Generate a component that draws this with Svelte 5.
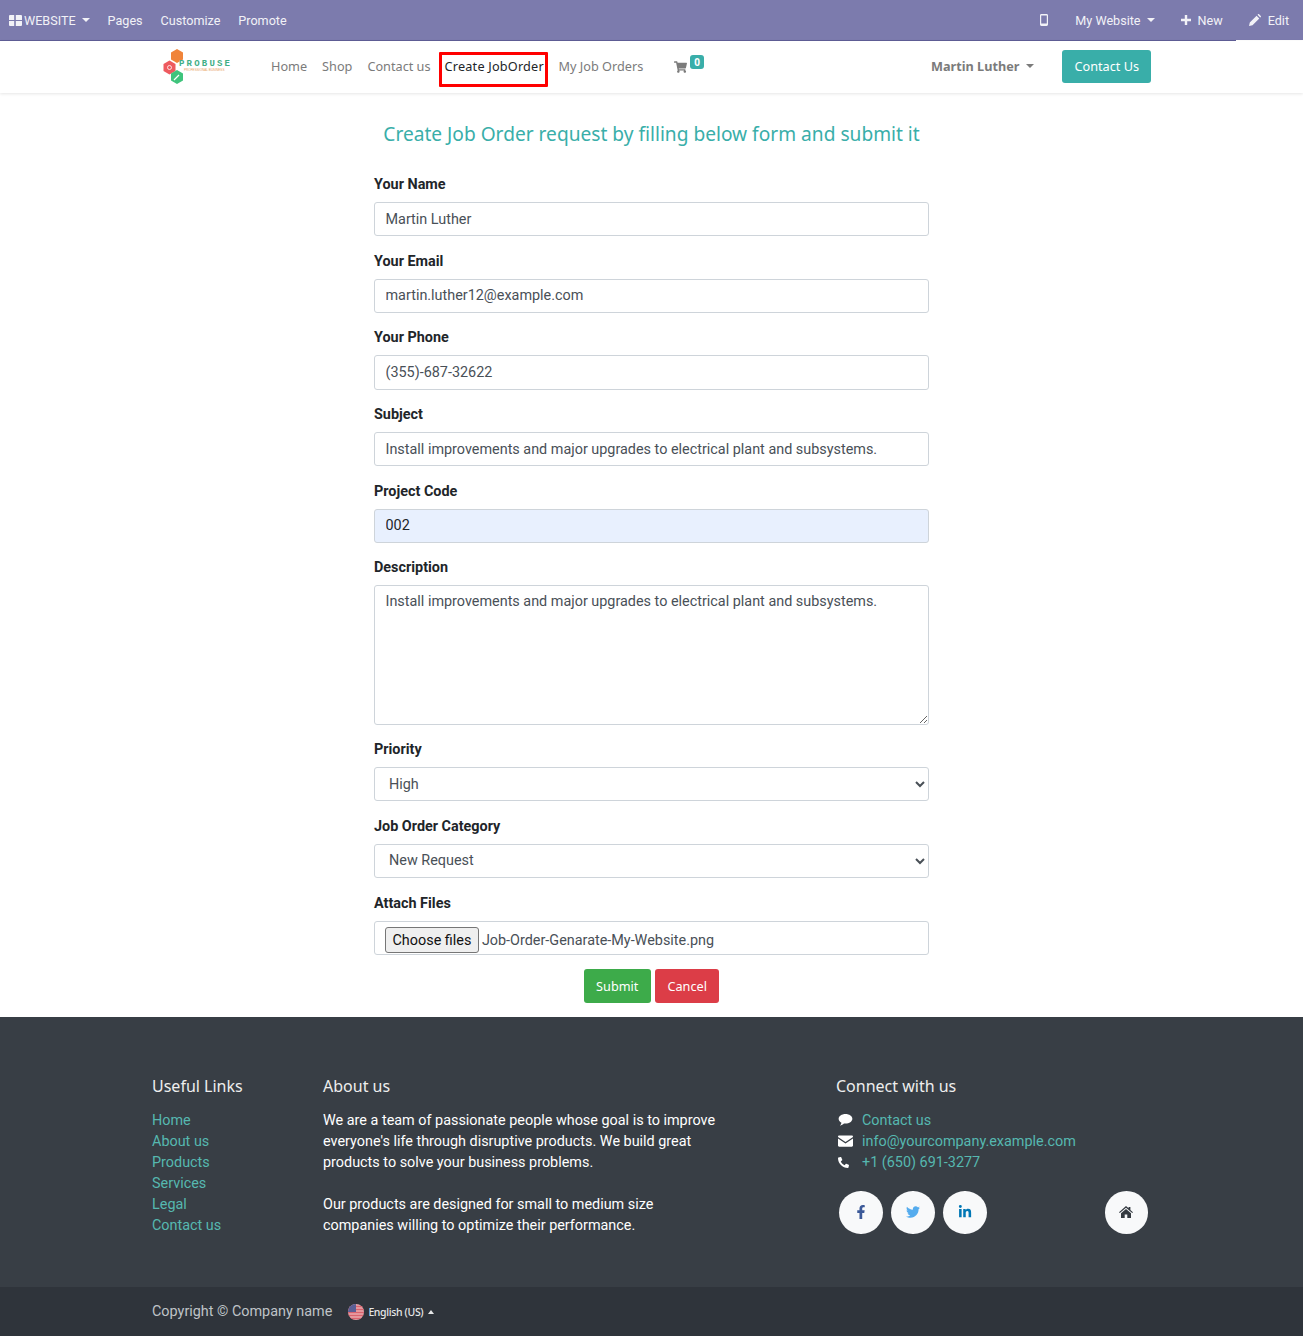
<script lang="ts">
	const usefulLinks = ['Home', 'About us', 'Products', 'Services', 'Legal', 'Contact us'];
</script>

<div class="topbar">
	<a class="tb-item brand" href="#top">
		<svg class="i-grid" viewBox="0 0 13 11"><path d="M0 1a1 1 0 0 1 1-1h4.2v5H0zM6.8 0H12a1 1 0 0 1 1 1v4H6.8zM0 6h5.2v5H1a1 1 0 0 1-1-1zM6.8 6H13v4a1 1 0 0 1-1 1H6.8z" /></svg>
		WEBSITE<span class="caret"></span>
	</a>
	<a class="tb-item" href="#top">Pages</a>
	<a class="tb-item" href="#top">Customize</a>
	<a class="tb-item" href="#top">Promote</a>
	<div class="tb-right">
		<svg class="i-mobile" viewBox="0 0 8 12"><path fill-rule="evenodd" d="M1.4 0h5.2C7.4 0 8 .6 8 1.4v9.2c0 .8-.6 1.4-1.4 1.4H1.4C.6 12 0 11.400 0 10.600V1.400C0 .6.6 0 1.400 0zM1.200 1.600v7.800h5.600V1.600z" /></svg>
		<a class="tb-item mywebsite" href="#top">My Website<span class="caret"></span></a>
		<a class="tb-item new" href="#top">
			<svg class="i-plus" viewBox="0 0 10 10"><path d="M3.800 0h2.400v3.800H10v2.400H6.200V10H3.800V6.200H0V3.800h3.800z" /></svg>New
		</a>
		<a class="tb-item edit" href="#top">
			<svg class="i-pencil" viewBox="0 0 12 12"><path d="M0 12l.8-3.500L7.600 1.700l2.700 2.700-6.800 6.800zM8.500.8L9.100.2c.3-.3.7-.3 1 0l1.700 1.700c.3.3.3.7 0 1l-.6.6z" /></svg>Edit
		</a>
	</div>
</div>

<header class="navbar">
	<a class="logo" href="#top">
		<svg viewBox="0 0 20 36" class="hexes">
			<path d="M14 1l6 3.500v7L14 15l-6-3.500v-7z" fill="#f0843a" />
			<path d="M6.500 12.500l6 3.500v7l-6 3.500-6-3.500v-7z" fill="#ee5a5f" />
			<path d="M14 22l6 3.500v7L14 36l-6-3.500v-7z" fill="#3fc47c" />
			<circle cx="6.500" cy="19.500" r="2" fill="none" stroke="#fff" stroke-width=".8" />
			<path d="M11 32l5-5" stroke="#fff" stroke-width="1.200" />
		</svg>
		<span class="logo-text">
			<span class="logo-name">PROBUSE</span>
			<span class="logo-tag">PROFESSIONAL BUSINESS</span>
		</span>
	</a>
	<nav class="nav-links">
		<a href="#top">Home</a>
		<a href="#top">Shop</a>
		<a href="#top">Contact us</a>
		<a class="current" href="#top">Create JobOrder</a>
		<a href="#top">My Job Orders</a>
		<a class="cart" href="#top">
			<svg viewBox="0 0 576 512"><path d="M528.120 301.319l47.273-208C578.806 78.301 567.391 67 551.990 67H159.208l-9.166-44.810C147.758 10.021 137.930 0 126.529 0H24C10.745 0 0 10.745 0 24v16c0 13.255 10.745 24 24 24h69.883l70.248 343.435C147.325 417.100 136 435.222 136 456c0 30.928 25.072 56 56 56s56-25.072 56-56c0-15.674-6.447-29.835-16.824-40h209.647C430.447 426.165 424 440.326 424 456c0 30.928 25.072 56 56 56s56-25.072 56-56c0-22.172-12.888-41.332-31.579-50.405l5.517-24.276c3.413-15.018-8.002-29.319-23.403-29.319H218.117l-6.545-32h293.145c11.206 0 20.920-7.754 23.403-18.681z" /></svg>
			<span class="badge">0</span>
		</a>
	</nav>
	<a class="user" href="#top">Martin Luther<span class="caret"></span></a>
	<a class="contact-btn" href="#top">Contact Us</a>
</header>

<main class="page">
	<h1>Create Job Order request by filling below form and submit it</h1>
	<form class="job-form" onsubmit={(event) => event.preventDefault()}>
		<div class="field">
			<label for="name">Your Name</label>
			<input id="name" type="text" value="Martin Luther" />
		</div>
		<div class="field">
			<label for="email">Your Email</label>
			<input id="email" type="text" value="martin.luther12@example.com" />
		</div>
		<div class="field">
			<label for="phone">Your Phone</label>
			<input id="phone" type="text" value="(355)-687-32622" />
		</div>
		<div class="field">
			<label for="subject">Subject</label>
			<input id="subject" type="text" value="Install improvements and major upgrades to electrical plant and subsystems." />
		</div>
		<div class="field">
			<label for="code">Project Code</label>
			<input id="code" class="autofilled" type="text" value="002" />
		</div>
		<div class="field">
			<label for="description">Description</label>
			<textarea id="description">Install improvements and major upgrades to electrical plant and subsystems.</textarea>
		</div>
		<div class="field">
			<label for="priority">Priority</label>
			<select id="priority"><option>High</option></select>
		</div>
		<div class="field">
			<label for="category">Job Order Category</label>
			<select id="category"><option>New Request</option></select>
		</div>
		<div class="field">
			<label for="files">Attach Files</label>
			<div class="file-box">
				<button id="files" type="button" class="choose">Choose files</button>
				<span>Job-Order-Genarate-My-Website.png</span>
			</div>
		</div>
		<div class="actions">
			<button type="submit" class="btn submit">Submit</button>
			<button type="button" class="btn cancel">Cancel</button>
		</div>
	</form>
</main>

<footer>
	<div class="footer-main">
		<section>
			<h5>Useful Links</h5>
			<ul>
				{#each usefulLinks as link}
					<li><a href="#top">{link}</a></li>
				{/each}
			</ul>
		</section>
		<section class="about">
			<h5>About us</h5>
			<p>We are a team of passionate people whose goal is to improve everyone's life through disruptive products. We build great products to solve your business problems.</p>
			<p>Our products are designed for small to medium size companies willing to optimize their performance.</p>
		</section>
		<section>
			<h5>Connect with us</h5>
			<ul class="connect">
				<li>
					<svg viewBox="0 0 16 14"><path d="M8 0c4.400 0 8 2.500 8 5.600s-3.600 5.600-8 5.600c-.6 0-1.200 0-1.800-.1C5 12.300 3.400 13.300 1.500 13.600c.9-.9 1.600-2 1.800-3.300C1.300 9.300 0 7.600 0 5.600 0 2.500 3.600 0 8 0z" /></svg>
					<a href="#top">Contact us</a>
				</li>
				<li>
					<svg viewBox="0 0 16 12"><path d="M1.300 0h13.400c.7 0 1.300.6 1.300 1.300v.5L8 7 0 1.800v-.5C0 .6.6 0 1.300 0zM0 3.400l8 5.200 8-5.200v7.300c0 .7-.6 1.300-1.300 1.300H1.300C.6 12 0 11.400 0 10.700z" /></svg>
					<a href="#top">info@yourcompany.example.com</a>
				</li>
				<li>
					<svg class="phone" viewBox="0 0 512 512"><path d="M493.400 24.600l-104-24c-11.300-2.600-22.900 3.300-27.500 13.900l-48 112c-4.200 9.800-1.400 21.300 6.900 28l60.600 49.600c-36 76.700-98.900 140.500-177.200 177.200l-49.600-60.600c-6.800-8.300-18.200-11.100-28-6.900l-112 48C3.900 366.500-2 378.100.6 389.400l24 104C27.100 504.200 36.700 512 48 512c256.100 0 464-207.500 464-464 0-11.200-7.700-20.900-18.600-23.400z" /></svg>
					<a href="#top">+1 (650) 691-3277</a>
				</li>
			</ul>
			<div class="socials">
				<a href="#top" class="round fb" aria-label="Facebook">
					<svg viewBox="0 0 320 512"><path d="M279.140 288l14.220-92.660h-88.910v-60.130c0-25.350 12.420-50.060 52.240-50.060h40.420V6.260S260.430 0 225.360 0c-73.220 0-121.080 44.380-121.080 124.720v70.620H22.890V288h81.390v224h100.170V288z" /></svg>
				</a>
				<a href="#top" class="round tw" aria-label="Twitter">
					<svg viewBox="0 0 512 512"><path d="M459.370 151.716c.325 4.548.325 9.097.325 13.645 0 138.720-105.583 298.558-298.558 298.558-59.452 0-114.680-17.219-161.137-47.106 8.447.974 16.568 1.299 25.340 1.299 49.055 0 94.213-16.568 130.274-44.832-46.132-.975-84.792-31.188-98.112-72.772 6.498.974 12.995 1.624 19.818 1.624 9.421 0 18.843-1.300 27.614-3.573-48.081-9.747-84.143-51.980-84.143-102.985v-1.299c13.969 7.797 30.214 12.670 47.431 13.319-28.264-18.843-46.781-51.005-46.781-87.391 0-19.492 5.197-37.360 14.294-52.954 51.655 63.675 129.300 105.258 216.365 109.807-1.624-7.797-2.599-15.918-2.599-24.040 0-57.828 46.782-104.934 104.934-104.934 30.213 0 57.502 12.670 76.670 33.137 23.715-4.548 46.456-13.320 66.599-25.340-7.798 24.366-24.366 44.833-46.132 57.827 21.117-2.273 41.584-8.122 60.426-16.243-14.292 20.791-32.161 39.308-52.628 54.253z" /></svg>
				</a>
				<a href="#top" class="round li" aria-label="LinkedIn">
					<svg viewBox="0 0 448 512"><path d="M100.280 448H7.400V148.900h92.880zM53.790 108.100C24.090 108.100 0 83.500 0 53.800a53.790 53.790 0 0 1 107.580 0c0 29.700-24.100 54.300-53.790 54.300zM447.900 448h-92.680V302.400c0-34.700-.7-79.200-48.290-79.200-48.290 0-55.690 37.700-55.690 76.700V448h-92.780V148.900h89.080v40.800h1.300c12.400-23.500 42.690-48.300 87.880-48.300 94 0 111.280 61.900 111.280 142.300V448z" /></svg>
				</a>
				<a href="#top" class="round home" aria-label="Home">
					<svg viewBox="0 0 14 12"><path d="M7 0l2.600 2.300V1h1.800v2.900L14 6.200l-.8.9L7 1.700.8 7.100 0 6.200zM2 7.200L7 2.900l5 4.300V12H8.300V8.600H5.700V12H2z" /></svg>
				</a>
			</div>
		</section>
	</div>
	<div class="copyright">
		<span class="copy-text">Copyright © Company name</span>
		<svg class="flag" viewBox="0 0 16 16">
			<defs><clipPath id="flag-clip"><circle cx="8" cy="8" r="8" /></clipPath></defs>
			<g clip-path="url(#flag-clip)">
				<rect width="16" height="16" fill="#e8a9ad" />
				<path d="M0 2.500h16M0 5.500h16M0 8.500h16M0 11.500h16M0 14.500h16" stroke="#d9636e" stroke-width="1.400" />
				<rect width="8" height="8" fill="#5a5f96" />
			</g>
		</svg>
		<a class="lang" href="#top">English (US)<span class="caret up"></span></a>
	</div>
</footer>

<style>
	:global(body) {
		margin: 0;
		background: #fff;
		font-family: Roboto, 'Liberation Sans', sans-serif;
		font-size: 14.4px;
		color: #212529;
	}
	a {
		text-decoration: none;
		color: inherit;
	}
	svg {
		fill: currentColor;
		flex: none;
	}
	.caret {
		display: inline-block;
		margin-left: 6px;
		border-top: 4px solid currentColor;
		border-left: 4px solid transparent;
		border-right: 4px solid transparent;
		vertical-align: 2px;
	}
	.caret.up {
		border-top: 0;
		border-bottom: 4px solid currentColor;
		border-left-width: 3.500px;
		border-right-width: 3.500px;
		margin-left: 5px;
	}

	.topbar {
		display: flex;
		align-items: center;
		box-sizing: border-box;
		height: 41px;
		padding: 0 14px 0 9px;
		background: #7c7bad;
		border-bottom: 1px solid #5f5e97;
		color: #f2f2f7;
		font-size: 12.600px;
	}
	.tb-item {
		display: inline-flex;
		align-items: center;
		margin-right: 18px;
	}
	.i-grid {
		width: 13px;
		height: 11px;
		margin-right: 2px;
	}
	.tb-right {
		display: flex;
		align-items: center;
		align-self: stretch;
		margin-left: auto;
	}
	.i-mobile {
		width: 8px;
		height: 12px;
		margin-right: 27px;
	}
	.mywebsite {
		margin-right: 26px;
	}
	.i-plus {
		width: 10px;
		height: 10px;
		margin-right: 7px;
	}
	.new {
		margin-right: 13px;
	}
	.i-pencil {
		width: 12px;
		height: 12px;
		margin-right: 7px;
	}
	.edit {
		position: relative;
		align-self: stretch;
		margin-right: -14px;
		padding: 0 14px 0 13px;
	}
	.edit::after {
		content: '';
		position: absolute;
		left: 0;
		right: 0;
		bottom: -1px;
		height: 1px;
		background: #fff;
	}

	.navbar {
		display: flex;
		align-items: center;
		box-sizing: border-box;
		height: 52px;
		padding: 0 152px 2px 163px;
		background: #fff;
		box-shadow: 0 1px 3px #0000001a;
		font-family: 'Noto Sans', sans-serif;
		font-size: 12.700px;
		color: #7b7b7b;
		position: relative;
	}
	.logo {
		display: flex;
		align-items: center;
		width: 108px;
		flex: none;
	}
	.hexes {
		width: 20px;
		height: 36px;
	}
	.logo-text {
		display: flex;
		flex-direction: column;
		margin-left: -4px;
		line-height: 1;
	}
	.logo-name {
		font-family: 'Liberation Mono', monospace;
		font-weight: 700;
		font-size: 9px;
		letter-spacing: 2.200px;
		color: #3fae86;
	}
	.logo-tag {
		padding-left: 5px;
		font-family: 'Liberation Sans', sans-serif;
		font-size: 3.100px;
		color: #e8a15f;
		white-space: nowrap;
	}
	.nav-links {
		display: flex;
		align-items: center;
		gap: 15px;
	}
	.current {
		margin: 7px -4px 0 -7px;
		padding: 1px 0 7px 3px;
		width: 100px;
		box-sizing: content-box;
		border: 3px solid #f00;
		border-radius: 1px;
		line-height: 21px;
		color: #212529;
		white-space: nowrap;
		letter-spacing: 0.2px;
	}
	.cart {
		display: flex;
		align-items: flex-start;
		margin-left: 16px;
	}
	.cart svg {
		width: 13px;
		height: 12px;
		margin-top: 2px;
	}
	.badge {
		display: block;
		margin: -4px 0 0 3px;
		padding: 0 4px;
		border-radius: 3px;
		background: #39aea9;
		color: #fff;
		font-size: 10px;
		line-height: 14px;
		font-weight: 700;
	}
	.user {
		margin-left: auto;
		margin-right: 28px;
		font-weight: 700;
		color: #7b7b7b;
	}
	.user .caret {
		margin-left: 7px;
		vertical-align: 3px;
	}
	.contact-btn {
		padding: 0 12px;
		height: 33px;
		line-height: 33px;
		background: #39aea9;
		color: #fff;
		border-radius: 3px;
	}

	.page {
		padding: 27px 0 13.660px;
	}
	h1 {
		margin: 0 0 26.040px;
		text-align: center;
		font-family: 'Noto Sans', sans-serif;
		font-weight: 400;
		font-size: 19.150px;
		line-height: 28px;
		color: #39aea9;
	}
	.job-form {
		width: 555px;
		margin: 0 auto;
	}
	.field {
		margin-bottom: 14.400px;
	}
	label {
		display: block;
		height: 21px;
		margin-bottom: 7px;
		line-height: 21px;
		font-weight: 700;
		font-size: 14.400px;
	}
	input,
	textarea,
	select,
	.file-box {
		display: block;
		box-sizing: border-box;
		width: 100%;
		height: 34.300px;
		padding: 0 10.500px;
		border: 1px solid #ced4da;
		border-radius: 3px;
		background: #fff;
		color: #495057;
		font-family: inherit;
		font-size: 14.400px;
		outline: none;
	}
	select {
		padding: 0 10px;
	}
	.autofilled {
		background: #e8f0fe;
		color: #212529;
	}
	textarea {
		height: 139.300px;
		padding: 5px 10.500px;
		line-height: 21px;
		margin: 0;
	}
	.file-box {
		display: flex;
		align-items: center;
		gap: 3px;
		padding: 5px 10px 0;
	}
	.choose {
		height: 26px;
		padding: 0 6.500px;
		border: 1px solid #767676;
		border-radius: 3px;
		background: #efefef;
		color: #111;
		font-family: inherit;
		font-size: 14.400px;
	}
	.actions {
		display: flex;
		justify-content: center;
		gap: 4px;
	}
	.btn {
		height: 34px;
		padding: 0 12.500px;
		border: 0;
		border-radius: 3px;
		color: #fff;
		font-family: 'Noto Sans', sans-serif;
		font-size: 12.700px;
	}
	.submit {
		background: #3dab4a;
	}
	.cancel {
		background: #dc3d47;
	}

	footer {
		background: #383e45;
		color: #fff;
	}
	.footer-main {
		display: grid;
		grid-template-columns: 171px 513px 1fr;
		box-sizing: border-box;
		height: 270px;
		padding: 56px 0 0 152px;
	}
	h5 {
		margin: 0 0 11px;
		font-family: 'Noto Sans', sans-serif;
		font-weight: 400;
		font-size: 16px;
		line-height: 26px;
		color: #eee;
	}
	ul {
		margin: 0;
		padding: 0;
		list-style: none;
	}
	li,
	.about p {
		line-height: 21px;
	}
	li a {
		color: #56b8b0;
	}
	.about p {
		width: 400px;
		margin: 0 0 21px;
	}
	.connect li {
		display: flex;
		align-items: center;
	}
	.connect svg {
		width: 15px;
		height: 12px;
		margin: 0 9px 0 2px;
		color: #fff;
	}
	.connect .phone {
		transform: scaleX(-1);
		width: 11px;
		height: 11px;
		margin: 0 13px 0 2px;
	}
	.socials {
		display: flex;
		gap: 8.500px;
		margin: 18px 0 0 3px;
		width: 309px;
	}
	.round {
		display: flex;
		align-items: center;
		justify-content: center;
		width: 43.500px;
		height: 43px;
		border-radius: 50%;
		background: #f8f9fa;
		color: #343a40;
	}
	.round svg {
		height: 14px;
		width: 14px;
	}
	.fb {
		color: #3b5998;
	}
	.tw {
		color: #55acee;
	}
	.li {
		color: #0077b5;
	}
	.home {
		margin-left: auto;
	}
	.copyright {
		display: flex;
		align-items: center;
		height: 49px;
		padding-left: 152px;
		background: #2f343b;
		color: #bfc3c7;
		font-size: 14.400px;
	}
	.copy-text {
		margin-top: 1px;
	}
	.flag {
		width: 16px;
		height: 16px;
		margin: 1px 4px 0 16px;
	}
	.lang {
		font-family: 'Noto Sans', sans-serif;
		font-size: 10.500px;
		font-weight: 500;
		letter-spacing: -0.350px;
		color: #e6e7e8;
		margin-top: 2px;
	}
	.lang .caret {
		vertical-align: 2px;
	}
</style>
